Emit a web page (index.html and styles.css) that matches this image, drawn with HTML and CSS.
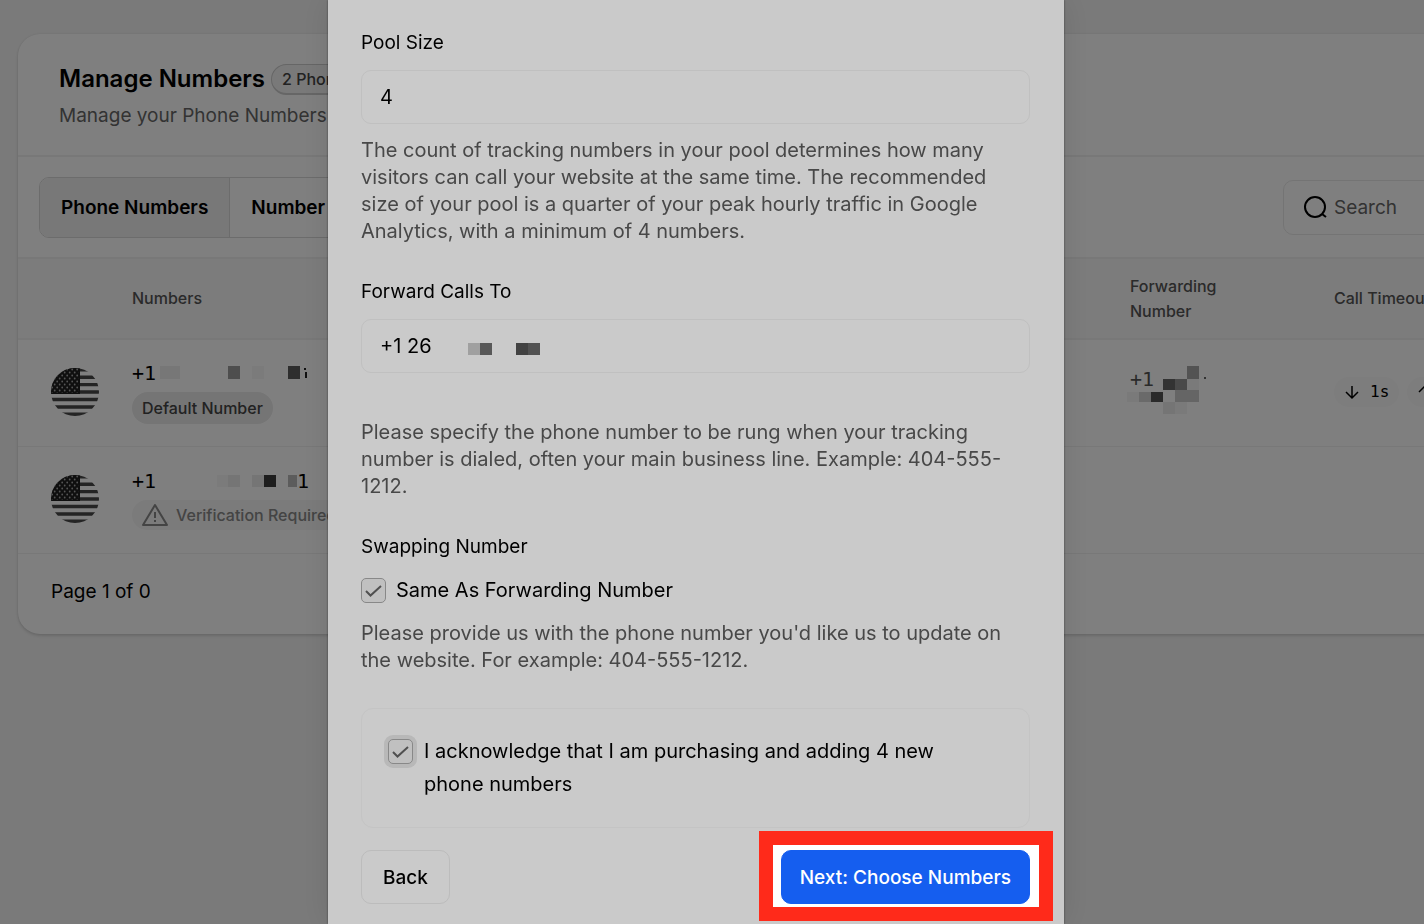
FILE: index.html
```html
<!DOCTYPE html>
<html lang="en">
<head>
  <meta charset="UTF-8" />
  <meta name="viewport" content="width=device-width, initial-scale=1.0" />
  <title>Manage Numbers</title>
  <link rel="stylesheet" href="styles.css">
</head>
<body>
  <!-- shared flag icon -->
  <svg class="defs" width="0" height="0">
    <defs>
      <clipPath id="flag-clip"><circle cx="24" cy="24" r="24" /></clipPath>
      <pattern id="stars" width="5" height="6" patternUnits="userSpaceOnUse">
        <circle cx="1.2" cy="1.5" r="0.9" fill="#aaa" />
        <circle cx="3.7" cy="4.5" r="0.9" fill="#aaa" />
      </pattern>
      <symbol id="flag" viewBox="0 0 48 48">
        <g clip-path="url(#flag-clip)">
          <path d="M0 1.8h48M0 9.2h48M0 16.6h48M0 24h48M0 31.5h48M0 39h48M0 46.3h48" stroke="#484848" stroke-width="3.4" />
          <path d="M0 0h29v26H0z" fill="#1e1e1e" />
          <path d="M0 0h28v25H0z" fill="url(#stars)" />
        </g>
      </symbol>
    </defs>
  </svg>

  <main class="page">
    <section class="card">
      <header class="card-header">
        <div class="title-row">
          <h1>Manage Numbers</h1>
          <span class="count">2 Phone Numbers</span>
        </div>
        <p class="subtitle">Manage your Phone Numbers</p>
      </header>

      <div class="toolbar">
        <div class="tabs">
          <button type="button" class="tab active">Phone Numbers</button>
          <button type="button" class="tab">Number Pools</button>
        </div>
        <label class="search">
          <svg width="24" height="24" viewBox="0 0 24 24" fill="none" stroke="#000" stroke-width="2"><circle cx="12" cy="12" r="10" /><path d="M19 19l4 3" /></svg>
          <input type="search" placeholder="Search" aria-label="Search" />
        </label>
      </div>

      <table class="numbers">
        <colgroup>
          <col class="col-flag" />
          <col />
          <col class="col-forward" />
          <col class="col-timeout" />
        </colgroup>
        <thead>
          <tr>
            <th></th>
            <th>Numbers</th>
            <th>Forwarding<br />Number</th>
            <th>Call Timeout</th>
          </tr>
        </thead>
        <tbody>
          <tr>
            <td class="flag-cell"><svg class="flag" width="48" height="48"><use href="#flag" /></svg></td>
            <td>
              <div class="phone">
                <span>+1</span>
                <svg width="156" height="26" viewBox="0 0 156 26" shape-rendering="crispEdges">
                  <path d="M4 6h20v13H4z" fill="#eee" />
                  <path d="M72 6h12v13H72z" fill="#9c9c9c" />
                  <path d="M96 6h12v13H96z" fill="#f6f6f6" />
                  <path d="M132 6h12v13h-12z" fill="#5c5c5c" />
                  <path d="M148 8h2v2h-2zM149 12h2v6h-2z" fill="#222" />
                </svg>
              </div>
              <span class="tag">Default Number</span>
            </td>
            <td>
              <div class="forward">
                <span>+1</span>
                <svg class="mosaic" width="80" height="48" viewBox="0 0 80 48" shape-rendering="crispEdges">
                  <path d="M60 0h12v13H60z" fill="#a6a6a6" />
                  <path d="M36 13h12v11H36z" fill="#666" />
                  <path d="M48 13h12v11H48z" fill="#929292" />
                  <path d="M60 13h12v11H60zM0 26h12v10H0zM48 36h12v12H48z" fill="#f5f5f5" />
                  <path d="M12 26h12v10H12z" fill="#d4d4d4" />
                  <path d="M24 26h12v10H24z" fill="#555" />
                  <path d="M48 24h24v12H48z" fill="#cacaca" />
                  <path d="M36 36h12v12H36z" fill="#eaeaea" />
                  <path d="M77 11h2v2h-2z" fill="#666" />
                </svg>
              </div>
            </td>
            <td>
              <div class="timeouts">
                <span class="time"><svg width="16" height="16" viewBox="0 0 16 16" fill="none" stroke="#000" stroke-width="1.500"><path d="M8 2v12M2 8l6 6 6-6" /></svg>1s</span>
                <span class="time"><svg width="16" height="16" viewBox="0 0 16 16" fill="none" stroke="#000" stroke-width="1.500"><path d="M8 14V2M2 8l6-6 6 6" /></svg>1s</span>
              </div>
            </td>
          </tr>
          <tr>
            <td class="flag-cell"><svg class="flag" width="48" height="48"><use href="#flag" /></svg></td>
            <td>
              <div class="phone">
                <span>+1</span>
                <svg width="141" height="26" viewBox="0 0 141 26" shape-rendering="crispEdges">
                  <path d="M61 7h11v12H61z" fill="#f6f6f6" />
                  <path d="M72 7h12v12H72zM96 7h12v12H96z" fill="#eaeaea" />
                  <path d="M108 7h12v12h-12z" fill="#3c3c3c" />
                  <path d="M132 7h9v12h-9z" fill="#b8b8b8" />
                </svg>
                <span>1</span>
              </div>
              <span class="tag tag-warning">
                <svg width="26" height="22" viewBox="0 0 26 22" fill="none" stroke="#888" stroke-width="2" stroke-linejoin="round"><path d="M13 1L25 21H1z" /><path d="M13 8v6M13 16v2" /></svg>
                Verification Required
              </span>
            </td>
            <td></td>
            <td></td>
          </tr>
        </tbody>
      </table>

      <footer class="card-footer">Page 1 of 0</footer>
    </section>
  </main>

  <div class="overlay">
    <form class="modal" role="dialog" aria-label="Number pool">
      <div class="group">
        <label class="label" for="pool-size">Pool Size</label>
        <input class="input" type="text" id="pool-size" value="4" />
        <p class="help">The count of tracking numbers in your pool determines how many visitors can call your website at the same time. The recommended size of your pool is a quarter of your peak hourly traffic in Google Analytics, with a minimum of 4 numbers.</p>
      </div>

      <div class="group">
        <label class="label" for="forward-to">Forward Calls To</label>
        <div class="phone-field">
          <input class="input" type="text" id="forward-to" value="+1 26" />
          <svg class="hidden-digits" width="72" height="12" viewBox="0 0 72 12" shape-rendering="crispEdges">
            <path d="M0 0h12v12H0z" fill="#a0a0a0" />
            <path d="M12 0h12v12H12z" fill="#585858" />
            <path d="M48 0h12v12H48z" fill="#424242" />
            <path d="M60 0h12v12H60z" fill="#525252" />
          </svg>
        </div>
        <p class="help help-phone">Please specify the phone number to be rung when your tracking number is dialed, often your main business line. Example: 404-555-1212.</p>
      </div>

      <div class="group">
        <div class="label">Swapping Number</div>
        <label class="check-row">
          <input type="checkbox" class="check" checked />
          <span>Same As Forwarding Number</span>
        </label>
        <p class="help">Please provide us with the phone number you'd like us to update on the website. For example: 404-555-1212.</p>
      </div>

      <label class="acknowledge">
        <input type="checkbox" class="check focused" checked />
        <span>I acknowledge that I am purchasing and adding 4 new phone numbers</span>
      </label>

      <div class="actions">
        <button type="button" class="btn">Back</button>
        <div class="highlight">
          <button type="button" class="btn btn-primary">Next: Choose Numbers</button>
        </div>
      </div>
    </form>
  </div>
</body>
</html>
```

FILE: styles.css
```css
* {
  box-sizing: border-box;
}
body {
  font-family: Inter, "Liberation Sans", sans-serif;
  font-size: 20px;
  background-color: #f4f4f4;
  color: #000;
  margin: 0;
}
h1, p {
  margin: 0;
}
button, input {
  font-family: inherit;
  font-size: inherit;
  color: inherit;
}
.defs {
  position: absolute;
}

/* page behind the dialog */
.page {
  min-height: 100vh;
  padding: 34px 0 34px 18px;
  overflow: hidden;
}
.card {
  margin-right: -40px;
  background-color: #fff;
  border-radius: 22px;
  box-shadow: 0 0 2px rgba(0, 0, 0, 0.1), 0 2px 3px rgba(0, 0, 0, 0.12);
  overflow: hidden;
}
.card-header {
  height: 123px;
  padding: 28px 41px;
  border-bottom: 2px solid #f0f0f0;
}
.title-row {
  display: flex;
  align-items: center;
  gap: 6px;
}
h1 {
  font-size: 24px;
  font-weight: 600;
  line-height: 34px;
}
.count {
  height: 31px;
  padding: 0 10px;
  border: 1px solid #ccc;
  border-bottom-width: 2px;
  border-radius: 16px;
  background-color: #f2f2f2;
  color: #444;
  font-size: 16px;
  font-weight: 500;
  line-height: 29px;
}
.subtitle {
  margin-top: 7px;
  color: #666;
  font-size: 19px;
  line-height: 26px;
}
.toolbar {
  display: flex;
  justify-content: space-between;
  align-items: center;
  height: 100px;
  padding: 0 21px;
}
.tabs {
  display: flex;
  height: 61px;
  border: 1px solid #d8d8d8;
  border-radius: 10px;
  overflow: hidden;
}
.tab {
  padding: 0 21px;
  border: none;
  border-right: 1px solid #d8d8d8;
  background-color: #fff;
  font-size: 19px;
  font-weight: 600;
}
.tab.active {
  background-color: #f0f0f0;
}
.search {
  display: flex;
  align-items: center;
  gap: 7px;
  width: 160px;
  height: 55px;
  padding-left: 19px;
  border: 1px solid #e8e8e8;
  border-radius: 10px;
}
.search svg {
  flex: none;
}
.search input {
  width: 100%;
  min-width: 0;
  padding: 0;
  border: none;
  background: none;
  font-size: 19px;
}
.search input::placeholder {
  color: #666;
}
.numbers {
  width: 100%;
  table-layout: fixed;
  border-collapse: collapse;
}
.col-flag {
  width: 114px;
}
.col-forward {
  width: 204px;
}
.col-timeout {
  width: 130px;
}
th {
  height: 81px;
  padding: 0;
  border-top: 2px solid #f0f0f0;
  border-bottom: 2px solid #f0f0f0;
  background-color: #f8f8f8;
  color: #555;
  font-size: 16px;
  font-weight: 500;
  line-height: 25px;
  text-align: left;
  white-space: nowrap;
}
td {
  height: 107px;
  padding: 0 0 2px;
  border-bottom: 1px solid #f0f0f0;
  white-space: nowrap;
}
.flag-cell {
  padding-left: 33px;
}
.flag {
  display: block;
}
.phone {
  display: flex;
  align-items: center;
  height: 26px;
  margin-bottom: 6px;
  font-family: "DejaVu Sans Mono", monospace;
}
.tag {
  display: inline-flex;
  align-items: center;
  height: 32px;
  padding: 0 10px;
  border-radius: 16px;
  background-color: #eaeaea;
  color: #444;
  font-size: 16px;
  font-weight: 500;
  vertical-align: top;
}
.tag-warning {
  gap: 8px;
  height: 30px;
  background-color: #f6f6f6;
  color: #888;
}
.forward {
  position: relative;
  height: 52px;
  color: #555;
  font-family: "DejaVu Sans Mono", monospace;
  line-height: 26px;
}
.mosaic {
  position: absolute;
  top: 0;
  left: -3px;
}
.timeouts {
  display: flex;
  gap: 8px;
}
.time {
  display: flex;
  align-items: center;
  gap: 10px;
  height: 30px;
  padding: 0 10px;
  border-radius: 15px;
  background-color: #fafafa;
  font-family: "DejaVu Sans Mono", monospace;
  font-size: 16px;
}
.card-footer {
  padding: 23px 33px 27px;
  font-size: 19px;
  line-height: 30px;
}

/* dialog */
.overlay {
  position: fixed;
  inset: 0;
  display: flex;
  justify-content: center;
  padding-right: 32px;
  background-color: rgba(0, 0, 0, 0.5);
  overflow: hidden;
}
.modal {
  width: 736px;
  height: 100%;
  padding: 30px 34px 0 33px;
  background-color: #cacaca;
  box-shadow: 0 0 2px rgba(0, 0, 0, 0.5), 0 0 30px rgba(0, 0, 0, 0.1);
}
.group {
  margin-bottom: 34px;
}
.label {
  display: block;
  margin-bottom: 14px;
  font-size: 19px;
  line-height: 26px;
}
.input {
  display: block;
  width: 100%;
  height: 54px;
  padding: 0 18px;
  border: 1px solid #c0c0c0;
  border-radius: 10px;
  background-color: #cacaca;
  font-size: 20px;
}
.phone-field {
  position: relative;
}
.hidden-digits {
  position: absolute;
  top: 24px;
  left: 107px;
}
.help {
  margin-top: 13px;
  padding-right: 16px;
  color: #484848;
  font-size: 20px;
  line-height: 27px;
}
.help-phone {
  margin-top: 46px;
}
.check-row {
  display: flex;
  align-items: center;
  gap: 10px;
  height: 28px;
  margin: 16px 0;
}
.check {
  flex: none;
  appearance: none;
  width: 25px;
  height: 25px;
  margin: 0;
  border: 1px solid #888;
  border-radius: 5px;
  background-color: #c0c0c0;
}
.check:checked {
  background-image: url("data:image/svg+xml,%3Csvg xmlns='http://www.w3.org/2000/svg' viewBox='0 0 23 23' fill='none' stroke='%23505050' stroke-width='2'%3E%3Cpath d='M4 12l4.500 4.500L19 7'/%3E%3C/svg%3E");
}
.check.focused {
  margin-top: 4px;
  box-shadow: 0 0 0 4px #b8b8b8;
}
.acknowledge {
  display: flex;
  align-items: flex-start;
  gap: 11px;
  padding: 26px 60px 26px 26px;
  border: 1px solid #c4c4c4;
  border-radius: 12px;
  line-height: 33px;
}
.actions {
  display: flex;
  justify-content: space-between;
  margin-top: 22px;
}
.btn {
  height: 54px;
  padding: 0 21px;
  border: 1px solid #bcbcbc;
  border-radius: 10px;
  background-color: #cacaca;
  font-size: 19px;
  font-weight: 500;
}
.btn-primary {
  position: relative;
  padding: 0 18px;
  border-color: #155eef;
  background-color: #155eef;
  color: #fff;
}
.highlight {
  position: relative;
}
/* red frame around the primary action */
.highlight::before {
  content: "";
  position: absolute;
  inset: -19px -23px -17px -22px;
  border: 14px solid #ff2a1a;
  background-color: #fff;
}
```
